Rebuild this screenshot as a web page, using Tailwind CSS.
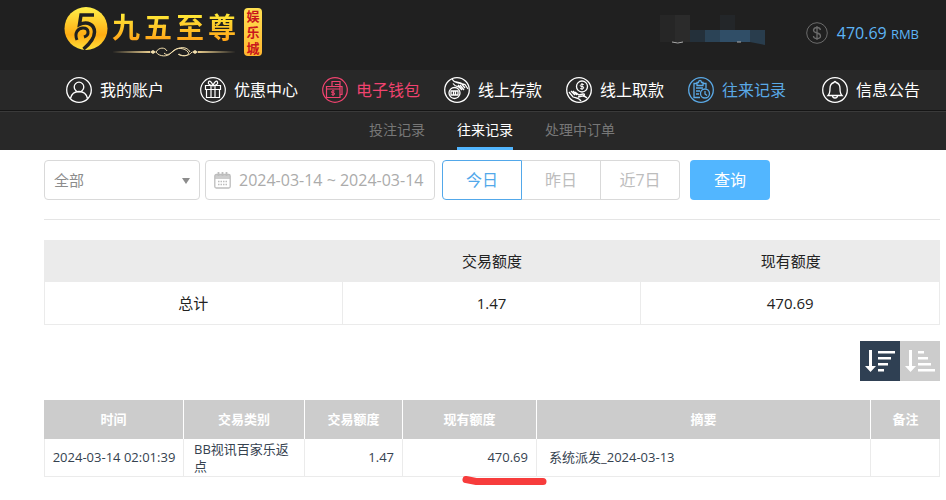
<!DOCTYPE html>
<html lang="zh-CN">
<head>
    <meta charset="UTF-8">
    <meta name="viewport" content="width=device-width, initial-scale=1.0">
    <title>往来记录</title>
    <script src="https://cdn.jsdelivr.net/npm/@tailwindcss/browser@4"></script>
</head>
<body class="bg-white min-h-screen font-['Open_Sans','Noto_Sans_CJK_SC',sans-serif]">

<!-- Header -->
<header class="bg-[#202020] h-[70px] pl-16 pr-[27px] flex justify-between">
    <a href="#" class="flex pt-[7px]" aria-label="九五至尊娱乐城">
        <svg class="w-11 h-11" viewBox="0 0 44 44" fill="none">
            <defs>
                <linearGradient id="gold" x1="0" y1="0" x2="0" y2="1">
                    <stop offset="0" stop-color="#fff04a"/>
                    <stop offset=".65" stop-color="#ffac12"/>
                    <stop offset="1" stop-color="#ffe23c"/>
                </linearGradient>
            </defs>
            <circle cx="22" cy="21.500" r="21.500" fill="url(#gold)"/>
            <path d="M30 8H17l-1.500 9.500c8-3.500 15 0 15 7.500 0 7-5 12-11 17" stroke="#202020" stroke-width="3.500"/>
            <path d="M13 33c-3-7 1-12 6-12 6 0 7 7 1 9" stroke="#202020" stroke-width="3"/>
        </svg>
        <span class="flex flex-col ml-1 pt-1">
            <span class="flex gap-1 text-[28px] leading-[32px] font-bold bg-linear-to-b from-[#fff13a] to-[#ff9d14] bg-clip-text text-transparent">
                <span>九</span><span>五</span><span>至</span><span>尊</span>
            </span>
            <svg class="w-[124px] h-[10px] mt-1" viewBox="0 0 124 10" fill="none" stroke="#f3dfae">
                <path d="M0 5l38-1v2zM124 5l-38-1v2z" fill="#e9cd8e" stroke="none"/>
                <path d="M38 5l3-2 3 2-3 2zM86 5l-3-2-3 2 3 2z" fill="#f3dfae" stroke="none"/>
                <path d="M44 5c3-5 9-5 11-1M44 5c3 5 12 5 15 1l4-3c4-3 12-4 15 2M52 6c3 3 6 1 9-2 4-4 12-3 15 1s-7 5-10 2M80 5c-3 4-9 5-13 2"/>
            </svg>
        </span>
        <span class="flex flex-col items-center self-start mt-px ml-2 w-[18px] rounded-sm bg-linear-to-b from-[#ffe052] to-[#ffb62e] text-[#c8161d] text-[13px] leading-[16px] font-bold">
            <span>娱</span><span>乐</span><span>城</span>
        </span>
    </a>
    <div class="flex items-center pb-1">
        <svg class="w-[106px] h-[30px] mr-10 mt-[-6px]" viewBox="0 0 106 30">
            <path fill="#262626" d="M0 0h15v27H0zM30 15h15v12H30z"/>
            <path fill="#2b2b2b" d="M15 0h15v27H15z"/>
            <path fill="#232629" d="M60 0h15v15H60z"/>
            <path fill="#24303a" d="M30 15h15v12H30z"/>
            <path fill="#2b4356" d="M45 15h15v12H45z"/>
            <path fill="#304e67" d="M60 15h30v12H60z"/>
            <path fill="#293d4d" d="M90 15h15v15l-15-3z"/>
            <path d="M12 27q6 2 11 0M77 27h4" stroke="#aaa" fill="none"/>
        </svg>
        <svg class="w-[22px] h-[22px] mr-[9px]" viewBox="0 0 22 22" fill="none" stroke="#6b6b6b">
            <circle cx="11" cy="11" r="10.300"/>
            <path d="M14.500 8q-.5-2.500-3.500-2.500T7.500 8q0 2.200 3.500 3t3.500 3q0 2.500-3.500 2.500T7.500 14M11 4v14" stroke-width="1.300"/>
        </svg>
        <span class="text-[#5db5f6] text-base">470.69 <span class="text-[13px]">RMB</span></span>
    </div>
</header>

<!-- Main navigation -->
<nav class="bg-[#282828] h-[41px] border-b border-[#151515] pl-[66px] flex items-center gap-9 text-base text-white whitespace-nowrap">
    <a href="#" class="flex items-center gap-2">
        <svg class="w-[26px] h-[26px]" viewBox="0 0 26 26" fill="none" stroke="currentColor" stroke-width="1.300">
            <circle cx="13" cy="13" r="12.300"/>
            <circle cx="13" cy="10" r="4.800"/>
            <path d="M4.500 21.500c1-4.500 4-7 8.500-7s7.500 2.500 8.500 7"/>
        </svg>
        我的账户
    </a>
    <div class="flex items-center gap-6">
        <a href="#" class="flex items-center gap-2">
            <svg class="w-[26px] h-[26px]" viewBox="0 0 26 26" fill="none" stroke="currentColor" stroke-width="1.200">
                <circle cx="13" cy="13" r="12.300"/>
                <path d="M5.500 8.500h15v4h-15zM6.500 12.500h13v8h-13zM11 8.500v12M15 8.500v12M13 8.500C10 8.500 7.500 7 8.500 5s3.500 0 4.500 3.500C14 5 16.500 3 17.500 5s-1.500 3.500-4.500 3.500"/>
            </svg>
            优惠中心
        </a>
        <a href="#" class="flex items-center gap-2 text-[#f0436f]">
            <svg class="w-[26px] h-[26px]" viewBox="0 0 26 26" fill="none" stroke="currentColor" stroke-width="1.200">
                <circle cx="13" cy="13" r="12.300"/>
                <path d="M10 9.500v-5h8v3h-5M18 7v2.500M4.500 9.500H18v11H4.500zM4.500 12H18M18 17.500h2v-8h-2"/>
                <path d="M12.500 14q-3-.7-3 .8t1.500 1 1.500 1.200-3 .5M11 13v6" stroke-width="1"/>
            </svg>
            电子钱包
        </a>
        <a href="#" class="flex items-center gap-2">
            <svg class="w-[26px] h-[26px]" viewBox="0 0 26 26" fill="none" stroke="currentColor" stroke-width="1.300">
                <circle cx="13" cy="13" r="12.300"/>
                <circle cx="10.500" cy="16" r="5.500"/>
                <path d="M7 14h7v4H7zM9.500 14v4M11.500 14v4"/>
                <path d="M8 2c1 2 3 3 5 3.500l8 2 3 4.500M9 6.500c2 3 4 3 6 3.500l2 2M12 5l5 1 4 5M14 8l4 5M16 8l4 5"/>
            </svg>
            线上存款
        </a>
        <a href="#" class="flex items-center gap-2">
            <svg class="w-[26px] h-[26px]" viewBox="0 0 26 26" fill="none" stroke="currentColor" stroke-width="1.300">
                <circle cx="13" cy="13" r="12.300"/>
                <circle cx="16" cy="9.500" r="5.500"/>
                <path d="M17.800 7.500q-3.500-.8-3.500.8t1.700 1.200 1.700 1.400-3.500.7M16 6v7" stroke-width="1"/>
                <path d="M3 15l4 5c3 1 6 .5 8 4M5 14l4 4M7 14l4 4M9 15l4 3 4-1c2 0 2 1 0 2l-5 1M17 19c2 0 3 1 4 2"/>
            </svg>
            线上取款
        </a>
        <a href="#" class="flex items-center gap-2 text-[#5aa9e6]">
            <svg class="w-[26px] h-[26px]" viewBox="0 0 26 26" fill="none" stroke="currentColor" stroke-width="1.300">
                <circle cx="13" cy="13" r="12.300"/>
                <path d="M12 20.500H6v-14h3M15 6.500h3v5M9 5.500h1.500q0-2 1.500-2t1.500 2H15v3H9zM8 11h7M8 14h4M8 17h3"/>
                <circle cx="17" cy="16.500" r="4.500"/>
                <path d="M17 14v3l2 1.500"/>
            </svg>
            往来记录
        </a>
    </div>
    <a href="#" class="flex items-center gap-2">
        <svg class="w-[26px] h-[26px]" viewBox="0 0 26 26" fill="none" stroke="currentColor" stroke-width="1.300">
            <circle cx="13" cy="13" r="12.300"/>
            <path d="M6 18.500c2-2 2-4 2-7q0-5 4-6a1 1 0 0 1 2 0q4 1 4 6c0 3 0 5 2 7zM10.500 18.500q0 2.500 2.500 2.500t2.500-2.500"/>
        </svg>
        信息公告
    </a>
</nav>

<!-- Sub navigation -->
<nav class="bg-[#282828] h-[39px] border-t border-[#3a3a3a] pl-[369px] flex gap-8 text-sm leading-[36px] text-[#777777] whitespace-nowrap">
    <a href="#">投注记录</a>
    <a href="#" class="text-white border-b-3 border-[#52b6ff]">往来记录</a>
    <a href="#">处理中订单</a>
</nav>

<main class="pl-11 pr-[6px] pt-[10px] pb-6">
    <!-- Filters -->
    <form class="flex h-10 text-base">
        <div class="relative w-[156px]">
            <select aria-label="类别" class="appearance-none w-full h-full border border-[#d9d9d9] rounded px-[9px] text-[15px] text-[#8c8c8c] bg-white">
                <option>全部</option>
            </select>
            <svg class="absolute right-[10px] top-[18px] w-2 h-[6px] pointer-events-none" viewBox="0 0 8 6"><path d="M0 0h8L4 6z" fill="#8c8c8c"/></svg>
        </div>
        <label class="ml-[5px] w-[230px] border border-[#d9d9d9] rounded flex items-center pl-2">
            <svg class="w-[17px] h-[17px] shrink-0" viewBox="0 0 17 17" fill="none" stroke="#bdbdbd" stroke-width="1.300">
                <rect x=".8" y="2.500" width="15.400" height="13.500" rx="1.500"/>
                <path d="M1 4h15M1 6h15" stroke-width="1.500"/>
                <path d="M4.500 0v4M8.500 0v4M12.500 0v4" stroke-width="1.800"/>
                <path d="M4 9.500h9M4 12.500h9" stroke-dasharray="1.500 1"/>
            </svg>
            <input type="text" aria-label="日期" value="2024-03-14 ~ 2024-03-14" class="ml-2 flex-1 min-w-0 text-[#ababab]">
        </label>
        <div class="flex ml-[7px] text-[#bdbdbd]">
            <button type="button" class="w-20 border border-[#52a8ea] rounded-l text-[#52a8ea]">今日</button>
            <button type="button" class="w-[79px] border-y border-r border-[#d9d9d9]">昨日</button>
            <button type="button" class="w-[79px] border-y border-r border-[#d9d9d9] rounded-r">近7日</button>
        </div>
        <button type="button" class="ml-[10px] w-20 rounded bg-[#52b6ff] text-white">查询</button>
    </form>

    <hr class="mt-[19px] border-[#e5e5e5]">

    <!-- Totals -->
    <table class="mt-5 w-full table-fixed border-separate border-spacing-0 text-[15px] text-[#222222] text-center">
        <thead class="bg-[#ebebeb]">
        <tr class="h-[42px]">
            <th></th>
            <th class="font-normal">交易额度</th>
            <th class="font-normal">现有额度</th>
        </tr>
        </thead>
        <tbody>
        <tr class="h-[43px]">
            <td class="border-x border-b border-[#ebebeb]">总计</td>
            <td class="border-r border-b border-[#ebebeb]">1.47</td>
            <td class="border-r border-b border-[#ebebeb]">470.69</td>
        </tr>
        </tbody>
    </table>

    <!-- Sort order -->
    <div class="flex justify-end mt-4">
        <button type="button" aria-label="降序" class="bg-[#2f4053]">
            <svg class="w-10 h-10" viewBox="0 0 40 40" fill="#fff">
                <path d="M9 9h3v16h4l-5.500 6L5 25h4zM18 10h17v2.500H18zM18 16h13v2.500H18zM18 22h10v2.500H18zM18 28h6v2.500h-6z"/>
            </svg>
        </button>
        <button type="button" aria-label="升序" class="bg-[#cccccc]">
            <svg class="w-10 h-10" viewBox="0 0 40 40" fill="#fff">
                <path d="M9 9h3v16h4l-5.500 6L5 25h4zM18 10h6v2.500h-6zM18 16h10v2.500H18zM18 22h13v2.500H18zM18 28h17v2.500H18z"/>
            </svg>
        </button>
    </div>

    <!-- Records -->
    <table class="mt-[19px] w-full table-fixed border-separate border-spacing-0 text-[13px] text-[#35424f]">
        <colgroup>
            <col class="w-[140px]">
            <col class="w-[121px]">
            <col class="w-[98px]">
            <col class="w-[134px]">
            <col>
            <col class="w-[69px]">
        </colgroup>
        <thead class="bg-[#cccccc] text-white">
        <tr class="h-[39px]">
            <th class="border-r border-white">时间</th>
            <th class="border-r border-white">交易类别</th>
            <th class="border-r border-white">交易额度</th>
            <th class="border-r border-white">现有额度</th>
            <th class="border-r border-white">摘要</th>
            <th>备注</th>
        </tr>
        </thead>
        <tbody>
        <tr class="h-[38px]">
            <td class="border-x border-b border-[#ebebeb] text-center whitespace-nowrap">2024-03-14 02:01:39</td>
            <td class="border-r border-b border-[#ebebeb] px-[10px] leading-[17px]">BB视讯百家乐返点</td>
            <td class="border-r border-b border-[#ebebeb] px-2 text-right">1.47</td>
            <td class="border-r border-b border-[#ebebeb] px-2 text-right relative">
                470.69
                <svg class="absolute z-10 left-[59px] top-full w-[86px] max-w-none h-[10px]" viewBox="0 0 86 10" fill="none" stroke="#f73c3c" stroke-width="7" stroke-linecap="round">
                    <path d="M4 3.500l10 2h67"/>
                </svg>
            </td>
            <td class="border-r border-b border-[#ebebeb] px-3">系统派发_2024-03-13</td>
            <td class="border-r border-b border-[#ebebeb]"></td>
        </tr>
        </tbody>
    </table>
</main>

</body>
</html>
